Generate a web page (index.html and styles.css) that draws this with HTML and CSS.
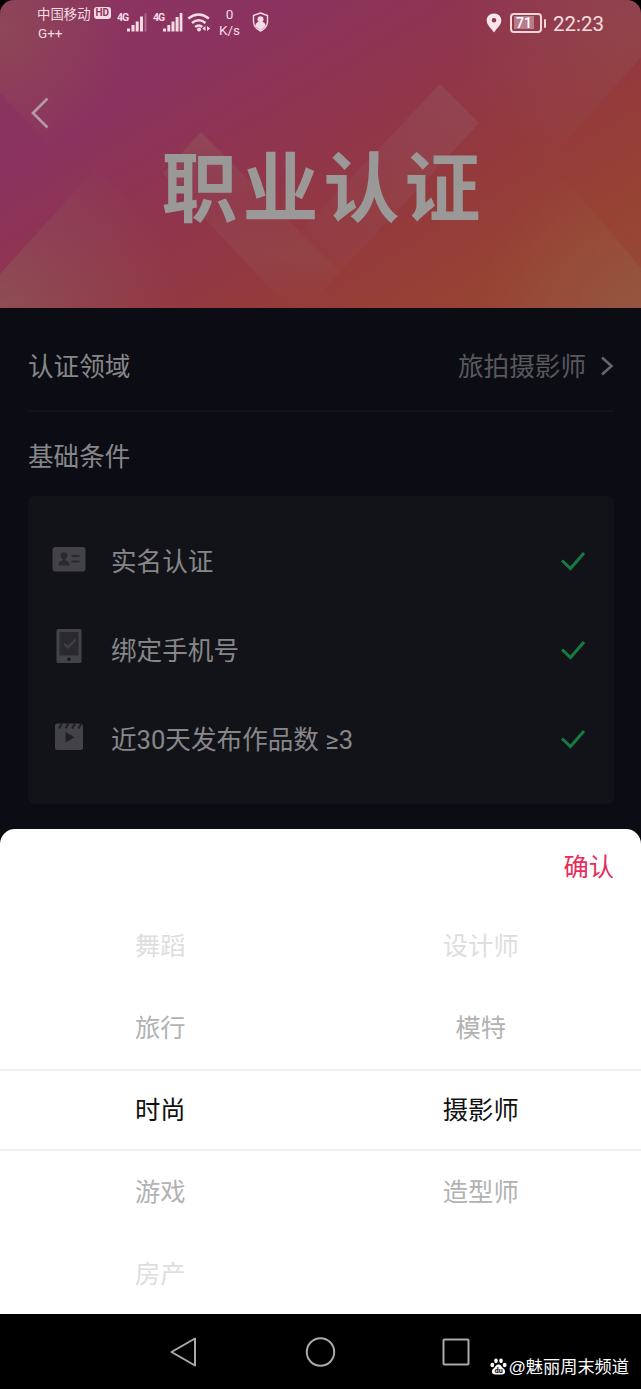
FILE: index.html
```html
<!DOCTYPE html>
<html lang="zh-CN">
<head>
<meta charset="utf-8">
<meta name="viewport" content="width=device-width, initial-scale=1">
<title>职业认证</title>
<link rel="stylesheet" href="styles.css">
</head>
<body>
<div class="phone">
  <header class="hero">
    <svg class="hero-art" viewBox="0 0 641 308" aria-hidden="true">
      <defs>
        <radialGradient id="ga" gradientUnits="userSpaceOnUse" cx="0" cy="30" r="125"><stop offset="0" stop-color="#946048" stop-opacity=".42"/><stop offset="1" stop-color="#946048" stop-opacity="0"/></radialGradient>
        <radialGradient id="gb" gradientUnits="userSpaceOnUse" cx="0" cy="308" r="180"><stop offset="0" stop-color="#8e5c56" stop-opacity=".6"/><stop offset="1" stop-color="#8e5c56" stop-opacity="0"/></radialGradient>
        <linearGradient id="gc" x1="1" y1="0" x2="0" y2="1"><stop offset="0" stop-color="#94606a" stop-opacity=".32"/><stop offset="1" stop-color="#94606a" stop-opacity=".04"/></linearGradient>
        <linearGradient id="gd" x1="0" y1="0" x2="0" y2="1"><stop offset="0" stop-color="#94605c" stop-opacity=".42"/><stop offset=".4" stop-color="#94605c" stop-opacity=".14"/><stop offset=".7" stop-color="#94605c" stop-opacity=".24"/><stop offset="1" stop-color="#94605c" stop-opacity="0"/></linearGradient>
        <radialGradient id="ge" gradientUnits="userSpaceOnUse" cx="641" cy="308" r="160"><stop offset="0" stop-color="#96604a" stop-opacity=".5"/><stop offset="1" stop-color="#96604a" stop-opacity="0"/></radialGradient>
        <radialGradient id="gf" gradientUnits="userSpaceOnUse" cx="630" cy="20" r="170"><stop offset="0" stop-color="#90585c" stop-opacity=".35"/><stop offset="1" stop-color="#90585c" stop-opacity="0"/></radialGradient>
      </defs>
      <path fill="url(#ga)" d="M0 0H130V230L0 93Z"/>
      <path fill="url(#gb)" d="M0 274L96 168L230 308H0Z"/>
      <path fill="url(#gc)" d="M440 84L479 123L340 272L300 232Z"/>
      <path fill="url(#gd)" d="M201 132L300 232L340 272L306 308H288L163 173Z"/>
      <path fill="url(#gf)" d="M641 0V57L500 215L440 0Z"/>
      <path fill="url(#ge)" d="M641 268V308H440L500 102Z"/>
    </svg>
    <div class="status">
      <div class="carrier">
        <div class="carrier-line"><span>中国移动</span><span class="hd">HD</span></div>
        <div class="carrier-sub">G++</div>
      </div>
      <svg class="signals" width="95" height="26" viewBox="0 0 95 26" aria-hidden="true">
        <g fill="#f3dbe4">
          <text class="net" x="0" y="13">4G</text><text class="net" x="36" y="13">4G</text>
          <path d="M10 20.500h3v3h-3zM14.500 17h3v6.500h-3zM18.700 13.500h3v10h-3zM23 8.500h3v15h-3z"/>
          <path opacity=".3" d="M27.500 5.500h2v18h-2z"/>
          <path d="M46 20.500h3v3h-3zM50.300 17h3v6.500h-3zM54.500 13.500h3v10h-3zM58.600 9h3v14.500h-3zM62.700 5h2.700v18.500h-2.700z"/>
        </g>
        <g fill="none" stroke="#f3dbe4" stroke-width="2.500"><path d="M71.300 10.500q10.300-8 20.600 0M75 15q6.700-5.500 13.500 0M78.200 19q3.600-3 7 0"/></g>
        <circle cx="82" cy="21.500" r="2" fill="#f3dbe4"/>
        <path fill="#f3dbe4" d="M88.500 18v5l-3.200-2.500zM90 18v5l3.200-2.500z"/>
      </svg>
      <div class="speed"><span>0</span><span>K/s</span></div>
      <svg class="shield" width="17" height="20" viewBox="0 0 17 20" aria-hidden="true"><path d="M8.500 1L15.500 3.500V10Q15 16 8.500 19Q2 16 1.500 10V3.500Z" fill="none" stroke="#f3dbe4" stroke-width="1.400"/><circle cx="8.500" cy="7.200" r="3" fill="#f3dbe4"/><path fill="#f3dbe4" d="M3.200 14Q3.800 9.500 8.500 9.500T13.800 14L8.500 18.500Z"/></svg>
      <div class="status-right">
        <svg width="16" height="20" viewBox="0 0 16 20" aria-hidden="true"><path fill="#f9e6ea" fill-rule="evenodd" d="M8 .5C3.500.5.700 3.500.700 7.500.700 12 5 15 8 19.500 11 15 15.300 12 15.300 7.500 15.300 3.500 12.500.5 8 .5ZM8 5a2.300 2.300 0 1 1 0 4.600 2.300 2.300 0 0 1 0-4.600Z"/></svg>
        <div class="battery"><span>71</span></div><i class="battery-tip"></i>
        <span class="clock">22:23</span>
      </div>
    </div>
    <svg class="back" width="20" height="34" viewBox="0 0 20 34" aria-hidden="true"><path d="M17.500 2.500L3 17L17.500 31.500" fill="none" stroke="#b39aa3" stroke-width="2.600"/></svg>
    <h1 class="title">职业认证</h1>
  </header>

  <main class="content">
    <section class="field">
      <span>认证领域</span>
      <span class="field-value"><span>旅拍摄影师</span>
        <svg width="14" height="20" viewBox="0 0 14 20" aria-hidden="true"><path d="M2 1.500L11.500 10L2 18.500" fill="none" stroke="#66666b" stroke-width="2.500"/></svg>
      </span>
    </section>
    <h2 class="subtitle">基础条件</h2>
    <ul class="card">
      <li class="row">
        <svg class="row-icon" width="34" height="36" viewBox="0 0 34 36" aria-hidden="true"><rect x=".5" y="5" width="33" height="24.500" rx="3" fill="#424247"/><g fill="#29292e"><circle cx="12" cy="13.500" r="3.300"/><path d="M10.500 15h3v4h-3zM6.500 23.500q0-4.500 4-5h3q4 .5 4 5z"/><path d="M19.500 13h8v2h-8zM19.500 18.500h8v2h-8z"/></g></svg>
        <span class="label">实名认证</span>
        <svg class="tick" width="26" height="20" viewBox="0 0 26 20" aria-hidden="true"><path d="M2 9.500L10.500 17.500L24 2"/></svg>
      </li>
      <li class="row">
        <svg class="row-icon phone-icon" width="34" height="36" viewBox="0 0 34 36" aria-hidden="true"><rect x="4.500" y="0" width="25" height="34" rx="1.500" fill="#424247"/><rect x="7.500" y="3" width="19" height="23.500" fill="#29292e"/><path d="M12 14.500l4 4 7.500-8" fill="none" stroke="#424247" stroke-width="2"/><circle cx="17" cy="30.300" r="1.700" fill="#17171b"/></svg>
        <span class="label">绑定手机号</span>
        <svg class="tick" width="26" height="20" viewBox="0 0 26 20" aria-hidden="true"><path d="M2 9.500L10.500 17.500L24 2"/></svg>
      </li>
      <li class="row">
        <svg class="row-icon clip-icon" width="34" height="36" viewBox="0 0 34 36" aria-hidden="true"><rect x="3" y="5.500" width="28" height="26.500" rx="2.500" fill="#424247"/><path d="M7 10.500l3-5M13.500 10.500l3-5M20 10.500l3-5M26.500 10.500l3-5" stroke="#202024" stroke-width="2"/><path d="M13.500 14l9 5.200-9 5.300z" fill="#202024"/></svg>
        <span class="label">近30天发布作品数 ≥3</span>
        <svg class="tick" width="26" height="20" viewBox="0 0 26 20" aria-hidden="true"><path d="M2 9.500L10.500 17.500L24 2"/></svg>
      </li>
    </ul>
  </main>

  <section class="sheet">
    <div class="sheet-head"><span>确认</span></div>
    <div class="picker">
      <div class="option far"><span>舞蹈</span><span>设计师</span></div>
      <div class="option near"><span>旅行</span><span>模特</span></div>
      <div class="option selected"><span>时尚</span><span>摄影师</span></div>
      <div class="option near"><span>游戏</span><span>造型师</span></div>
      <div class="option far"><span>房产</span><span></span></div>
    </div>
  </section>

  <nav class="navbar">
    <svg class="nav-keys" width="301" height="34" viewBox="0 0 301 34" aria-hidden="true"><g fill="none" stroke="#aaa" stroke-width="2" stroke-linejoin="round"><path d="M1.500 17L25 3.500V30.500Z"/><circle cx="150.500" cy="17" r="13.700"/><rect x="273.500" y="4.500" width="25" height="25" rx="1"/></g></svg>
    <div class="watermark">
      <svg width="17" height="17" viewBox="0 0 17 17" aria-hidden="true"><g fill="#fff"><ellipse cx="2.300" cy="7" rx="1.900" ry="2.300"/><ellipse cx="6" cy="2.800" rx="1.800" ry="2.400"/><ellipse cx="11" cy="2.800" rx="1.800" ry="2.400"/><ellipse cx="14.700" cy="7" rx="1.900" ry="2.300"/><path d="M8.500 6.500C6 6.500 5.500 9 3.500 10.500 1 12.500 1.500 16.500 5 16.500H12C15.500 16.500 16 12.500 13.500 10.500 11.500 9 11 6.500 8.500 6.500Z"/></g><text class="paw" x="4.800" y="14.800">du</text></svg>
      <span><span class="at">@</span>魅丽周末频道</span>
    </div>
  </nav>
</div>
</body>
</html>
```
FILE: styles.css
```css
* { box-sizing: border-box; }
body {
  margin: 0;
  background: #000;
  font-family: "Noto Sans CJK SC", sans-serif;
}
.phone {
  width: 641px;
  height: 1389px;
  display: flex;
  flex-direction: column;
  overflow: hidden;
  background: #000;
}
svg { display: block; flex: none; }

.hero {
  position: relative;
  height: 308px;
  flex: none;
  overflow: hidden;
  border-radius: 14px 14px 0 0;
  background: linear-gradient(149deg, #8b3462 0%, #8b335e 26%, #90354d 46%, #943a3c 66%, #974333 84%, #954b36 100%);
}
.hero-art { position: absolute; inset: 0; width: 641px; height: 308px; }
.status {
  position: relative;
  display: flex;
  align-items: flex-start;
  height: 96px;
  padding: 0 37px 0 37px;
  color: #f3dbe4;
}
.carrier { width: 80px; padding-top: 4px; }
.carrier-line { display: flex; align-items: center; gap: 3px; height: 17px; font-size: 13.400px; white-space: nowrap; }
.hd {
  padding: 0 2px;
  height: 12px;
  border-radius: 3px;
  background: #f3dbe4;
  color: #8b3459;
  font: 700 10px/12px Roboto, sans-serif;
}
.carrier-sub { font: 13.500px/18px Roboto, sans-serif; padding: 3px 0 0 1px; }
.signals { margin-top: 8px; }
.net { font: 700 10.500px Roboto, sans-serif; letter-spacing: -1px; }
.speed {
  width: 34px;
  padding: 6px 0 0 1px;
  display: flex;
  flex-direction: column;
  align-items: center;
  font: 13.500px/16px Roboto, sans-serif;
}
.shield { margin: 12px 0 0 6px; }
.status-right { display: flex; align-items: center; margin-left: auto; height: 46px; }
.battery {
  width: 32px;
  height: 20px;
  margin-left: 8px;
  padding: 1px 2px;
  border: 2px solid #f3d5da;
  border-radius: 4px;
}
.battery span {
  display: block;
  width: 20px;
  height: 13px;
  background: #b87b8a;
  color: #fff;
  text-align: center;
  font: 500 14px/14px Roboto, sans-serif;
}
.battery-tip { width: 2px; height: 9px; margin-left: 2px; border-radius: 1px; background: #f3d5da; }
.clock { margin-left: 7px; font: 20.500px/26px Roboto, sans-serif; color: #f5dde0; padding-top: 1px; }
.back { position: relative; margin-left: 30px; }
.title {
  position: relative;
  margin: -5px 0 0;
  padding-left: 6px;
  text-align: center;
  font-size: 76px;
  line-height: 116px;
  font-weight: 700;
  letter-spacing: 5px;
  color: #9b9998;
}

.content {
  height: 536px;
  flex: none;
  padding: 0 27px 0 28px;
  background: linear-gradient(#0c0d14 520px, #060609 536px);
  color: #87878a;
  font-size: 25.600px;
}
.field {
  display: flex;
  justify-content: space-between;
  align-items: center;
  height: 104px;
  padding-top: 10px;
  border-bottom: 2px solid #12131a;
}
.field-value { display: flex; align-items: center; gap: 14px; color: #58585d; }
.field-value svg { margin-top: 4px; }
.subtitle { margin: 0; padding-top: 24px; height: 84px; font-size: inherit; font-weight: 400; line-height: 38px; }
.card { list-style: none; margin: 0; padding: 19px 28px 0 24px; height: 308px; border-radius: 7px; background: #121318; }
.row { display: flex; align-items: center; height: 89px; }
.row-icon { margin-right: 25px; }
.phone-icon { margin-bottom: 3px; }
.clip-icon { margin-bottom: 3px; }
.label { font-family: Roboto, "Noto Sans CJK SC", sans-serif; padding-bottom: 1px; }
.tick { margin: 3px 0 0 auto; }
.tick path { fill: none; stroke: #167b42; stroke-width: 3; }

.sheet {
  height: 485px;
  flex: none;
  margin-top: -15px;
  border-radius: 15px 15px 0 0;
  background: #fff;
  font-size: 25.300px;
}
.sheet-head { display: flex; justify-content: flex-end; height: 76px; padding: 17px 27px 0 0; line-height: 38px; color: #e62d57; }
.option { display: grid; grid-template-columns: 1fr 1fr; align-items: center; height: 82px; padding-bottom: 5px; text-align: center; }
.far { color: #dedede; }
.near { color: #b2b2b2; }
.selected { color: #111; border: solid #efefef; border-width: 2px 0; }

.navbar {
  position: relative;
  height: 75px;
  flex: none;
  display: flex;
  justify-content: center;
  align-items: center;
  background: #000;
}
.watermark {
  position: absolute;
  right: 12px;
  bottom: 8px;
  display: flex;
  align-items: center;
  gap: 1px;
  color: #fff;
  font: 17.200px/28px "Noto Sans CJK SC", sans-serif;
}
.at { font-family: "Liberation Sans", sans-serif; }
.paw { font: 700 7px Roboto, sans-serif; fill: #000; }
```
